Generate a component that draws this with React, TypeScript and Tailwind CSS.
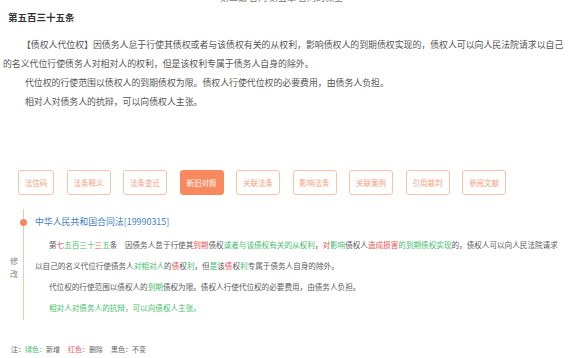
import React from "react";

type Seg = [string, "n" | "g" | "r"];

const TABS = ["法信码", "法条释义", "法条变迁", "新旧对照", "关联法条", "影响法条", "关联案例", "引用裁判", "参阅文献"];

const P1: Seg[] = [
  ["第", "n"], ["七", "r"], ["五百三十", "g"], ["三", "r"], ["五", "g"], ["条", "n"],
  ["　", "n"],
  ["因债务人怠于行使其", "n"], ["到期", "r"], ["债权", "n"], ["或者与该债权有关的从权利", "g"],
  ["，", "n"], ["对", "r"], ["影响", "g"], ["债权人", "n"], ["造成损害", "r"], ["的到期债权实现", "g"],
  ["的，债权人可以向人民法院请求以自己的名义代位行使债务人", "n"], ["对相对人", "g"], ["的", "n"],
  ["债", "r"], ["权", "n"], ["利", "g"], ["，但", "n"], ["是", "g"], ["该", "n"], ["债", "r"], ["权", "n"],
  ["利", "g"], ["专属于债务人自身的除外。", "n"],
];

const P2: Seg[] = [
  ["代位权的行使范围以债权人的", "n"], ["到期", "g"], ["债权为限。债权人行使代位权的必要费用，由债务人负担。", "n"],
];

const P3: Seg[] = [["相对人对债务人的抗辩，可以向债权人主张。", "g"]];

function Diff({ segs }: { segs: Seg[] }) {
  return (
    <p className="indent-[14px]">
      {segs.map(([t, c], i) => (
        <span
          key={i}
          className={c === "g" ? "text-[#3fc06c]" : c === "r" ? "text-[#f0525a]" : "text-[#5c5c5c]"}
        >
          {t}
        </span>
      ))}
    </p>
  );
}

export default function App() {
  return (
    <div className="w-[577px] h-[358px] overflow-hidden bg-white font-['Noto_Sans_CJK_SC',sans-serif] text-[#555]">
      {/* clipped page heading */}
      <div className="h-[3px] overflow-hidden pl-[220px]">
        <div className="-mt-[8px] text-[9px] leading-[11px] text-[#777]">第三编 合同 第五章 合同的保全</div>
      </div>

      {/* Article */}
      <div className="pl-[3px] pr-[8px]">
        <h2 className="pl-[5px] mt-[5px] text-[9.5px] font-bold leading-[19px] text-[#333]">第五百三十五条</h2>
        <div className="mt-[8px] text-[8.9px] leading-[19px] text-[#555]">
          <p className="indent-[19px]">
            【债权人代位权】因债务人怠于行使其债权或者与该债权有关的从权利，影响债权人的到期债权实现的，债权人可以向人民法院请求以自己的名义代位行使债务人对相对人的权利，但是该权利专属于债务人自身的除外。
          </p>
          <p className="indent-[22px]">代位权的行使范围以债权人的到期债权为限。债权人行使代位权的必要费用，由债务人负担。</p>
          <p className="indent-[22px]">相对人对债务人的抗辩，可以向债权人主张。</p>
        </div>
      </div>

      {/* Tabs */}
      <div className="mt-[59px] flex gap-[12.5px] pl-[18px]">
        {TABS.map((t, i) => {
          const active = t === "新旧对照";
          return (
            <div
              key={t}
              className={`h-[25px] ${i === 0 ? "w-[36px]" : "w-[44px]"} flex items-center justify-center rounded-[3px] border text-[7.5px] ${
                active ? "bg-[#f8895f] border-[#f8895f] text-white" : "border-[#fbc2aa] text-[#f5a07e]"
              }`}
            >
              {t}
            </div>
          );
        })}
      </div>

      {/* Revision timeline */}
      <div className="mt-[14px] flex pr-[15px]">
        <div className="w-[23px] shrink-0 pl-[10px] pt-[45px] text-[8px] leading-[13px] text-[#888]">
          <div>修</div>
          <div>改</div>
        </div>
        <div className="relative flex-1 border-l border-[#f8c6b2] pl-[11px] pt-[2.5px] pb-[2.5px]">
          <span className="absolute -left-[4px] top-[10px] h-[7px] w-[7px] rounded-full bg-[#f7865c]" />
          <div className="text-[8.9px] leading-[19px] text-[#3f7fc4]">中华人民共和国合同法[19990315]</div>
          <div className="mt-[3px] text-[7.6px] leading-[21px]">
            <Diff segs={P1} />
            <Diff segs={P2} />
            <Diff segs={P3} />
          </div>
        </div>
      </div>

      {/* Legend */}
      <div className="mt-[23px] pl-[11px] text-[7px] leading-[12px] text-[#666]">
        注：<span className="text-[#3fc06c]">绿色：</span>新增
        <span className="ml-[8px] text-[#f0525a]">红色：</span>删除
        <span className="ml-[8px]">黑色：</span>不变
      </div>
    </div>
  );
}
